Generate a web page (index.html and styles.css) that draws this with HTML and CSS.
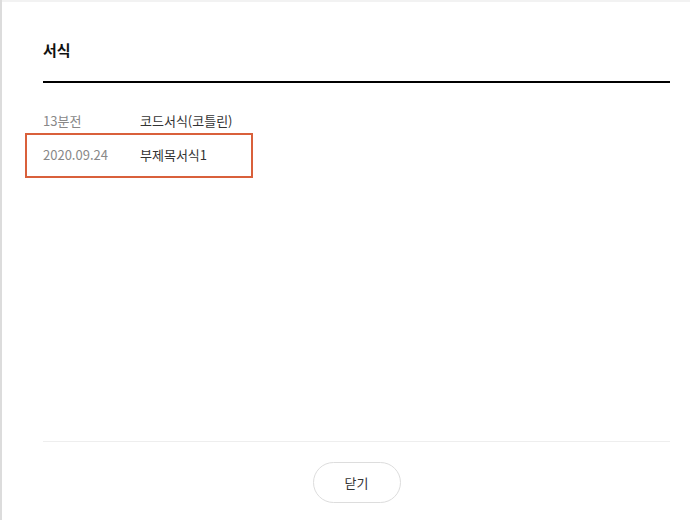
FILE: index.html
```html
<!DOCTYPE html>
<html lang="ko">
<head>
<meta charset="utf-8">
<title>서식</title>
<link rel="stylesheet" href="styles.css">
</head>
<body>
<div class="page">
  <div class="modal">
    <h2 class="modal-title">서식</h2>
    <ul class="history">
      <li class="row">
        <span class="date">13분전</span>
        <span class="name">코드서식(코틀린)</span>
      </li>
      <li class="row row-selected">
        <span class="date">2020.09.24</span>
        <span class="name">부제목서식1</span>
        <span class="highlight"></span>
      </li>
    </ul>
    <div class="modal-footer">
      <button class="btn-close" type="button">닫기</button>
    </div>
  </div>
</div>
</body>
</html>
```

FILE: styles.css
```css
* { box-sizing: border-box; }
html, body { margin: 0; padding: 0; }
body {
  font-family: "Noto Sans CJK KR", "Noto Sans", sans-serif;
  background: #f2f2f2;
  color: #333;
}
.page {
  height: 520px;
  padding-top: 2px;
  border-left: 2px solid #dcdcdc;
  display: flex;
}
.modal {
  flex: 1;
  background: #fff;
  padding: 38px 20px 17px 41px;
  display: flex;
  flex-direction: column;
}
.modal-title {
  margin: 0;
  font-size: 15px;
  font-weight: 700;
  line-height: 20px;
  color: #111;
  padding-bottom: 21px;
  border-bottom: 2px solid #000;
}
.history {
  list-style: none;
  margin: 0;
  padding: 21px 0 0;
  flex: 1;
}
.row {
  position: relative;
  display: flex;
  height: 34px;
  line-height: 34px;
  font-size: 13px;
}
.date {
  width: 97px;
  color: #888;
}
.name {
  color: #333;
}
.highlight {
  position: absolute;
  left: -18px;
  top: -5px;
  width: 228px;
  height: 45px;
  border: 2px solid #d9603b;
}
.modal-footer {
  border-top: 1px solid #eee;
  padding-top: 20px;
  display: flex;
  justify-content: center;
}
.btn-close {
  width: 88px;
  height: 41px;
  border: 1px solid #ddd;
  border-radius: 21px;
  background: #fff;
  font-family: inherit;
  font-size: 13px;
  color: #333;
  padding: 0;
}
```
